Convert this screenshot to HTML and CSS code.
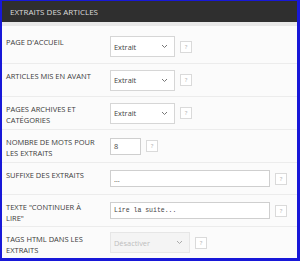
FILE: index.html
```html
<!DOCTYPE html>
<html lang="fr">
<head>
    <meta charset="UTF-8">
    <title>Extraits des articles</title>
    <link rel="stylesheet" href="styles.css">
</head>
<body>
    <div class="panel">
        <div class="panel-title">EXTRAITS DES ARTICLES</div>
        <div class="rows">
            <div class="row first">
                <div class="label">PAGE D'ACCUEIL</div>
                <div class="field">
                    <div class="select">Extrait
                        <svg class="chev" width="7" height="5" viewBox="0 0 7 5"><path d="M1 1l2.5 2.5L6 1" fill="none" stroke="#777" stroke-width="1"/></svg>
                    </div>
                    <span class="help">?</span>
                </div>
            </div>
            <div class="row">
                <div class="label">ARTICLES MIS EN AVANT</div>
                <div class="field">
                    <div class="select">Extrait
                        <svg class="chev" width="7" height="5" viewBox="0 0 7 5"><path d="M1 1l2.5 2.5L6 1" fill="none" stroke="#777" stroke-width="1"/></svg>
                    </div>
                    <span class="help">?</span>
                </div>
            </div>
            <div class="row">
                <div class="label">PAGES ARCHIVES ET CATÉGORIES</div>
                <div class="field">
                    <div class="select">Extrait
                        <svg class="chev" width="7" height="5" viewBox="0 0 7 5"><path d="M1 1l2.5 2.5L6 1" fill="none" stroke="#777" stroke-width="1"/></svg>
                    </div>
                    <span class="help">?</span>
                </div>
            </div>
            <div class="row">
                <div class="label">NOMBRE DE MOTS POUR LES EXTRAITS</div>
                <div class="field">
                    <div class="input small">8</div>
                    <span class="help">?</span>
                </div>
            </div>
            <div class="row short">
                <div class="label">SUFFIXE DES EXTRAITS</div>
                <div class="field">
                    <div class="input wide">…</div>
                    <span class="help">?</span>
                </div>
            </div>
            <div class="row short">
                <div class="label">TEXTE "CONTINUER À LIRE"</div>
                <div class="field">
                    <div class="input wide mono">Lire la suite...</div>
                    <span class="help">?</span>
                </div>
            </div>
            <div class="row last">
                <div class="label">TAGS HTML DANS LES EXTRAITS</div>
                <div class="field">
                    <div class="select disabled">Désactiver
                        <svg class="chev" width="7" height="5" viewBox="0 0 7 5"><path d="M1 1l2.5 2.5L6 1" fill="none" stroke="#aaa" stroke-width="1"/></svg>
                    </div>
                    <span class="help">?</span>
                </div>
            </div>
        </div>
    </div>
</body>
</html>
```

FILE: styles.css
```css
* {
    margin: 0;
    padding: 0;
    box-sizing: border-box;
}

body {
    width: 300px;
    height: 261px;
    font-family: "Open Sans", "Liberation Sans", sans-serif;
    background: #fff;
}

.panel {
    width: 300px;
    height: 261px;
    border-style: solid;
    border-color: #1818d8;
    border-width: 1px 3px 3px 2px;
    background: #fbfbfb;
}

.panel-title {
    height: 25px;
    padding: 5px 0 0 8px;
    background: #2f2f2f;
    border-bottom: 4px solid #e8e8e8;
    color: #dcdcdc;
    font-size: 8px;
    line-height: 11px;
}

.row {
    display: grid;
    grid-template-columns: 92px 1fr;
    height: 33px;
    padding-left: 4px;
    border-bottom: 1px solid #ececec;
}

.row.first {
    height: 38px;
    padding-top: 4px;
}

.row.short {
    height: 32px;
}

.row.last {
    height: 31px;
    border-bottom: none;
}

.label {
    padding-top: 7px;
    font-size: 7.5px;
    line-height: 10.5px;
    color: #3c3c3c;
    font-weight: 500;
}

.field {
    display: flex;
    align-items: center;
    gap: 5px;
    padding-left: 12px;
}

.select {
    display: flex;
    align-items: center;
    justify-content: space-between;
    width: 65px;
    height: 21px;
    padding: 0 4px 0 3px;
    background: #fff;
    border: 1px solid #d6d6d6;
    font-size: 7.4px;
    color: #444;
}

.select.disabled {
    width: 80px;
    background: #f4f4f4;
    border-color: #e6e6e6;
    color: #bdbdbd;
}

.chev {
    margin-right: 2px;
}

.input {
    display: flex;
    align-items: center;
    height: 17px;
    padding-left: 3px;
    background: #fff;
    border: 1px solid #cfcfcf;
    font-size: 7.4px;
    color: #444;
}

.input.small {
    width: 31px;
}

.input.wide {
    width: 160px;
}

.input.mono {
    font-family: "Liberation Mono", "DejaVu Sans Mono", monospace;
    font-size: 6.5px;
}

.help {
    display: flex;
    align-items: center;
    justify-content: center;
    width: 12px;
    height: 12px;
    border: 1px solid #dadada;
    background: #fff;
    font-size: 6px;
    color: #aaa;
}
```
